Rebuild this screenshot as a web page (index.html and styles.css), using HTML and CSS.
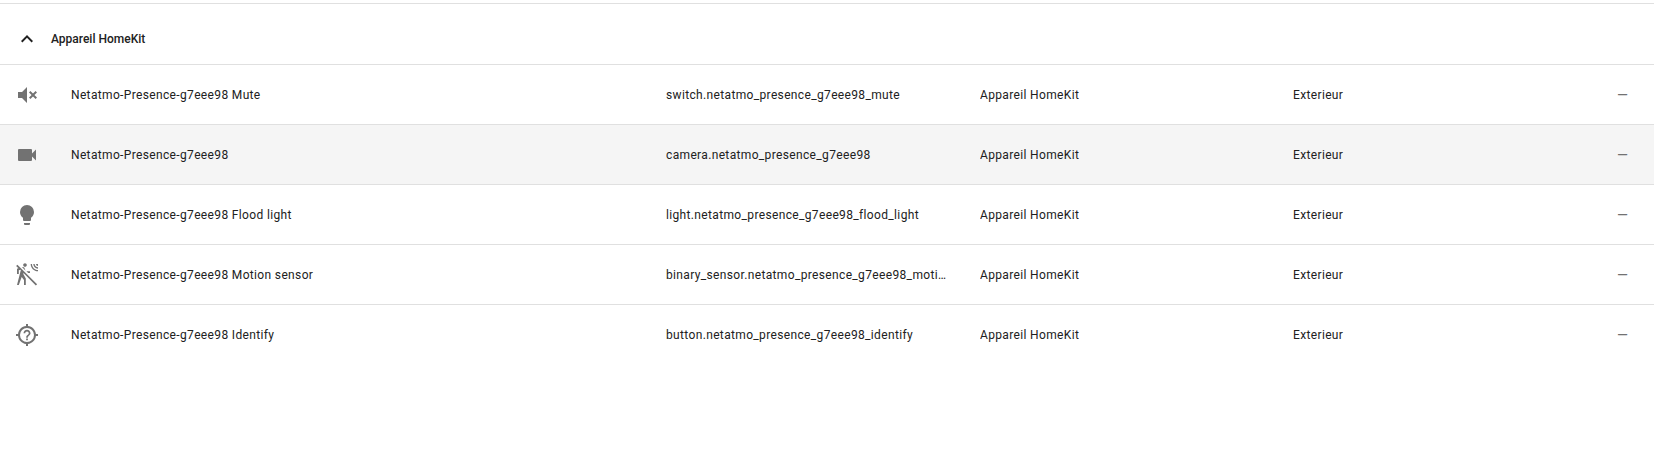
FILE: index.html
```html
<!DOCTYPE html>
<html lang="fr">
<head>
<meta charset="utf-8">
<title>Appareil HomeKit</title>
<link rel="stylesheet" href="styles.css">
</head>
<body>
<div class="topbar"></div>
<section class="table">
  <div class="group">
    <svg class="chevron" viewBox="0 0 24 24"><path d="M7.41,15.41L12,10.83L16.59,15.41L18,14L12,8L6,14L7.41,15.41Z"/></svg>
    <span class="group-title">Appareil HomeKit</span>
  </div>
  <div class="row">
    <div class="cell-icon"><svg class="icon" viewBox="0 0 24 24"><path d="M3,9H7L12,4V20L7,15H3V9M14,9.4L15.4,8L18,10.6L20.6,8L22,9.4L19.4,12L22,14.6L20.6,16L18,13.4L15.4,16L14,14.6L16.6,12L14,9.4Z"/></svg></div>
    <div class="cell">Netatmo-Presence-g7eee98 Mute</div>
    <div class="cell">switch.netatmo_presence_g7eee98_mute</div>
    <div class="cell">Appareil HomeKit</div>
    <div class="cell">Exterieur</div>
    <div class="cell-dash">—</div>
  </div>
  <div class="row hovered">
    <div class="cell-icon"><svg class="icon" viewBox="0 0 24 24"><path d="M17,10.5V7A1,1 0 0,0 16,6H4A1,1 0 0,0 3,7V17A1,1 0 0,0 4,18H16A1,1 0 0,0 17,17V13.5L21,17.5V6.5L17,10.5Z"/></svg></div>
    <div class="cell">Netatmo-Presence-g7eee98</div>
    <div class="cell">camera.netatmo_presence_g7eee98</div>
    <div class="cell">Appareil HomeKit</div>
    <div class="cell">Exterieur</div>
    <div class="cell-dash">—</div>
  </div>
  <div class="row">
    <div class="cell-icon"><svg class="icon" viewBox="0 0 24 24"><path d="M12,2A7,7 0 0,0 5,9C5,11.38 6.19,13.47 8,14.74V17A1,1 0 0,0 9,18H15A1,1 0 0,0 16,17V14.74C17.81,13.47 19,11.38 19,9A7,7 0 0,0 12,2M9,21A1,1 0 0,0 10,22H14A1,1 0 0,0 15,21V20H9V21Z"/></svg></div>
    <div class="cell">Netatmo-Presence-g7eee98 Flood light</div>
    <div class="cell">light.netatmo_presence_g7eee98_flood_light</div>
    <div class="cell">Appareil HomeKit</div>
    <div class="cell">Exterieur</div>
    <div class="cell-dash">—</div>
  </div>
  <div class="row">
    <div class="cell-icon"><svg class="icon" viewBox="0 0 24 24"><path d="M11.4 8.2H15V10H13.2L11.4 8.2M19.67 1H18.33C18.33 3.58 20.42 5.67 23 5.67V4.33C21.16 4.33 19.67 2.84 19.67 1M21 1C21 2.11 21.9 3 23 3V1H21M17 1H15.67C15.67 5.05 18.95 8.33 23 8.33V7C19.69 7 17 4.31 17 1M10 3.8C11 3.8 11.8 3 11.8 2S11 .2 10 .2 8.2 1 8.2 2 9 3.8 10 3.8M2.39 1.73L1.11 3L3.46 5.35L2 5.8V11H3.8V7.33L5.91 6.67L2 22H3.8L6.67 13.89L9 17V22H10.8V15.59L8.31 11.05L8.5 10.12L20.84 22.46L22.11 21.19L2.39 1.73M9.38 4.87C9.08 4.37 8.54 4.03 7.92 4.03C7.75 4.03 7.58 4.06 7.42 4.11L7.15 4.2L10.58 7.63L9.38 4.87Z"/></svg></div>
    <div class="cell">Netatmo-Presence-g7eee98 Motion sensor</div>
    <div class="cell">binary_sensor.netatmo_presence_g7eee98_motion</div>
    <div class="cell">Appareil HomeKit</div>
    <div class="cell">Exterieur</div>
    <div class="cell-dash">—</div>
  </div>
  <div class="row">
    <div class="cell-icon"><svg class="icon" viewBox="0 0 24 24"><path d="M3.05,13H1V11H3.05C3.5,6.83 6.83,3.5 11,3.05V1H13V3.05C17.17,3.5 20.5,6.83 20.95,11H23V13H20.95C20.5,17.17 17.17,20.5 13,20.95V23H11V20.95C6.83,20.5 3.5,17.17 3.05,13M12,5A7,7 0 0,0 5,12A7,7 0 0,0 12,19A7,7 0 0,0 19,12A7,7 0 0,0 12,5M11.13,17.25H12.88V15.5H11.13V17.25M12,6.75C10.07,6.75 8.5,8.32 8.5,10.25H10.25C10.25,9.28 11.03,8.5 12,8.5C12.97,8.5 13.75,9.28 13.75,10.25C13.75,12 11.13,11.78 11.13,14.63H12.88C12.88,12.66 15.5,12.44 15.5,10.25C15.5,8.32 13.93,6.75 12,6.75Z"/></svg></div>
    <div class="cell">Netatmo-Presence-g7eee98 Identify</div>
    <div class="cell">button.netatmo_presence_g7eee98_identify</div>
    <div class="cell">Appareil HomeKit</div>
    <div class="cell">Exterieur</div>
    <div class="cell-dash">—</div>
  </div>
</section>
</body>
</html>
```
FILE: styles.css
```css
html, body {
  margin: 0;
  padding: 0;
  background: #fff;
}
body {
  height: 456px;
  overflow: hidden;
  font-family: Roboto, sans-serif;
  font-size: 12px;
  color: #212121;
}
.topbar {
  height: 3px;
  border-bottom: 1px solid #e0e0e0;
}
.group {
  display: flex;
  align-items: center;
  height: 50px;
  padding-top: 10px;
  border-bottom: 1px solid #e0e0e0;
}
.chevron {
  width: 24px;
  height: 24px;
  margin-left: 15px;
  margin-right: 12px;
  fill: #212121;
}
.group-title {
  font-weight: 500;
}
.row {
  display: grid;
  grid-template-columns: 71px 595px 314px 313px 324px 1fr;
  align-items: center;
  height: 59px;
  border-bottom: 1px solid #e0e0e0;
}
.row:last-child {
  border-bottom: none;
}
.row.hovered {
  background: #f5f5f5;
}
.cell-icon {
  display: flex;
  padding-left: 15px;
}
.icon {
  width: 24px;
  height: 24px;
  fill: #727272;
}
.cell {
  padding-right: 32px;
  letter-spacing: 0.35px;
  white-space: nowrap;
  overflow: hidden;
  text-overflow: ellipsis;
}
.cell-dash {
  color: #727272;
  font-size: 14px;
}
```
